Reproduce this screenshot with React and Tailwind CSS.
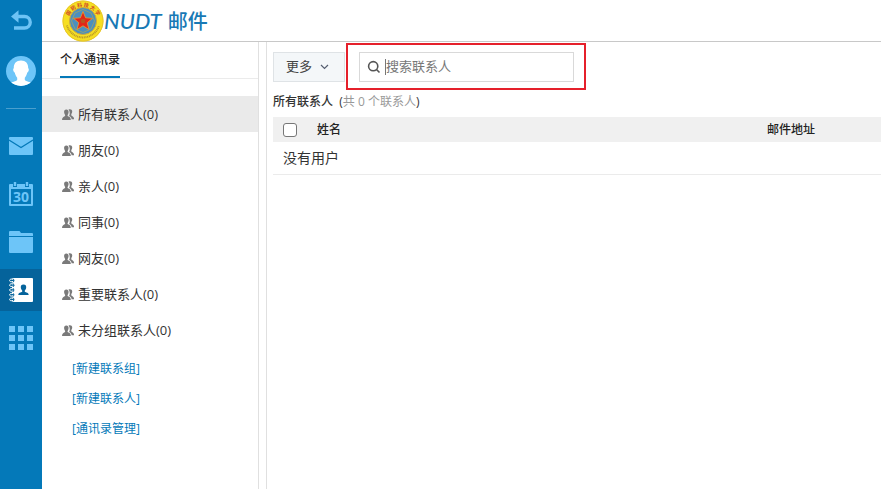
import React, { useState } from "react";

const groups = [
  { name: "所有联系人", count: 0 },
  { name: "朋友", count: 0 },
  { name: "亲人", count: 0 },
  { name: "同事", count: 0 },
  { name: "网友", count: 0 },
  { name: "重要联系人", count: 0 },
  { name: "未分组联系人", count: 0 },
];

const actions = ["[新建联系组]", "[新建联系人]", "[通讯录管理]"];

// --- Icons ---
function BackIcon() {
  return (
    <svg width="22" height="22" viewBox="0 0 22 22" fill="none">
      <path d="M8 6.500H14.500A5.500 5.500 0 0 1 14.500 18H4" stroke="#6dc3f5" strokeWidth="3.400" />
      <path d="M1 6.500L8.500 .3V12.700Z" fill="#6dc3f5" />
    </svg>
  );
}

function Avatar() {
  return (
    <svg width="30" height="30" viewBox="0 0 30 30">
      <clipPath id="avatar-clip"><circle cx="15" cy="15" r="15" /></clipPath>
      <circle cx="15" cy="15" r="15" fill="#6dc5f8" />
      <path
        clipPath="url(#avatar-clip)"
        fill="#fff"
        d="M15 4.500C10.300 4.500 7.600 7.500 7.800 12.300c-.6.400-.8 1.200-.5 2.300.3 1.100.8 1.600 1.400 1.900.5 2.300 1.500 4 2.500 5.200v2.300C10 25.600 6 25.800 3.500 27.200V30H26.500V27.200C24 25.800 20 25.600 18.800 24V21.700c1-1.200 2-2.900 2.500-5.200.6-.3 1.100-.8 1.400-1.900.3-1.100.1-1.900-.5-2.300C22.400 7.500 19.700 4.500 15 4.500Z"
      />
    </svg>
  );
}

function MailIcon() {
  return (
    <svg width="24" height="18" viewBox="0 0 24 18">
      <rect width="24" height="18" rx="1" fill="#6dc5f8" />
      <path d="M0 3L12 10.500L24 3" fill="none" stroke="#0479b9" strokeWidth="1.200" />
    </svg>
  );
}

function CalendarIcon() {
  return (
    <svg width="24" height="24" viewBox="0 0 24 24">
      <path fill="#6dc5f8" d="M1 2H4V5H8V2H16V5H20V2H23Q24 2 24 3V23Q24 24 23 24H1Q0 24 0 23V3Q0 2 1 2ZM2 7V22H22V7Z" fillRule="evenodd" />
      <path d="M6 0V4M18 0V4" stroke="#6dc5f8" strokeWidth="2.400" />
      <text x="12" y="20" textAnchor="middle" fill="#6dc5f8" className="font-['Noto_Sans',sans-serif] text-[14px] font-bold">30</text>
    </svg>
  );
}

function FolderIcon() {
  return (
    <svg width="24" height="22" viewBox="0 0 24 22" fill="#6dc5f8">
      <path d="M1 0H10.500L12 2H23Q24 2 24 3V5H0V1Q0 0 1 0Z" />
      <path d="M0 6H24V21Q24 22 23 22H1Q0 22 0 21Z" />
    </svg>
  );
}

function ContactsIcon() {
  return (
    <svg width="24" height="24" viewBox="0 0 24 24">
      <path fill="#fff" d="M3 0H23Q24 0 24 1V23Q24 24 23 24H3Z" />
      {[2.5, 7.2, 12, 16.8, 21.500].map((y) => (
        <g key={y}>
          <circle cx="3.500" cy={y} r="1.900" fill="#05639b" />
          <path d={`M4.200 ${y - 1}C2.500 ${y - 2} .6 ${y - 1.300} .6 ${y}S2.500 ${y + 1.700} 4.200 ${y + 0.800}`} fill="none" stroke="#fff" strokeWidth="1" />
        </g>
      ))}
      <path fill="#05639b" d="M14.500 6.500C12.400 6.500 11.700 7.800 11.800 9.500C11.900 10.900 12.600 11.900 13.200 12.500V13.800C12 14.500 9.300 14.600 9.300 17H19.700C19.700 14.600 17 14.500 15.800 13.800V12.500C16.400 11.900 17.100 10.900 17.200 9.500C17.300 7.800 16.600 6.500 14.500 6.500Z" />
    </svg>
  );
}

function GridIcon() {
  return (
    <svg width="24" height="24" viewBox="0 0 24 24" fill="#6dc5f8">
      {[0, 9, 18].map((y) => [0, 9, 18].map((x) => <rect key={`${x}-${y}`} x={x} y={y} width="6" height="6" />))}
    </svg>
  );
}

function GroupIcon() {
  return (
    <svg width="12" height="11" viewBox="0 0 12 11" fill="#7a7a7a" className="shrink-0">
      <path d="M6.500 .5C8.300-.3 10.300 .3 10.200 2.500C10.200 3.700 9.800 4.500 9.300 5V6.400C10.300 7.300 12 7.500 12 9.500V10.300H9.600C9.500 8.600 8.500 7.700 7.100 7.100C8.100 5.400 8 2 6.500 .5Z" />
      <path d="M4.300 .5C6 .5 6.700 1.700 6.600 3.300C6.500 4.500 6.100 5.300 5.600 5.900V7C6.700 7.700 8.800 7.900 8.800 11H0C0 8.300 2 7.700 3.100 7V5.900C2.600 5.300 2.200 4.500 2.100 3.300C2 1.700 2.700 .5 4.300 .5Z" />
    </svg>
  );
}

function SearchIcon() {
  return (
    <svg width="14" height="14" viewBox="0 0 14 14" fill="none" stroke="#555" strokeWidth="1.600" className="shrink-0">
      <circle cx="6.200" cy="6.200" r="4.600" />
      <path d="M9.500 9.500L12.500 12.500" />
    </svg>
  );
}

function Seal() {
  return (
    <svg width="42" height="42" viewBox="0 0 42 42">
      <circle cx="21" cy="21" r="20.500" fill="#f6df22" />
      <circle cx="21" cy="21" r="20" fill="none" stroke="#e8c52c" />
      <circle cx="21" cy="21" r="13.500" fill="#4a8fc0" stroke="#d0a83a" />
      <path id="seal-top" d="M6 25A15.300 15.300 0 1 1 36 25" fill="none" />
      <text fill="#d04a28" className="font-['Noto_Sans_CJK_SC',sans-serif] text-[5px] font-bold">
        <textPath href="#seal-top" startOffset="50%" textAnchor="middle">国 防 科 技 大 学</textPath>
      </text>
      <path d="M5 25.500A16.700 16.700 0 0 0 37 25.500" fill="none" stroke="#b8962a" strokeWidth="2" strokeDasharray="1 .7" />
      <path d="M21 9.500L29 13L32.500 21L29 29L21 32.500L13 29L9.500 21L13 13Z" fill="none" stroke="#8da07a" />
      <path d="M21 11.500L23.600 17.800L30.500 18.300L25.200 22.700L27 29.500L21 25.800L15 29.500L16.800 22.700L11.500 18.300L18.400 17.800Z" fill="#e2261a" stroke="#e8a02f" strokeWidth=".8" />
      <circle cx="21" cy="21" r="2.300" fill="#b8541f" />
    </svg>
  );
}

const apps = [
  { id: "mail", label: "邮件", Icon: MailIcon },
  { id: "calendar", label: "日历", Icon: CalendarIcon },
  { id: "files", label: "文件", Icon: FolderIcon },
  { id: "contacts", label: "通讯录", Icon: ContactsIcon },
  { id: "more", label: "应用", Icon: GridIcon },
];

export default function App() {
  const [active, setActive] = useState(0);
  const [query, setQuery] = useState("");

  return (
    <div className="flex min-h-screen bg-white font-['Open_Sans','Noto_Sans_CJK_SC',sans-serif] text-[13px] text-[#333]">
      {/* App rail */}
      <nav className="flex w-[42px] shrink-0 flex-col items-center bg-[#0479b9]">
        <button aria-label="返回" className="mt-[10px]"><BackIcon /></button>
        <button aria-label="个人资料" className="mt-6"><Avatar /></button>
        <div className="mt-[22px] mb-4 h-px w-[30px] bg-[#4a9fce]" />
        <div className="flex w-full flex-col gap-1.5">
          {apps.map(({ id, label, Icon }) => (
            <button
              key={id}
              aria-label={label}
              className={`flex h-[42px] w-full items-center justify-center ${id === "contacts" ? "bg-[#05639b]" : ""}`}
            >
              <Icon />
            </button>
          ))}
        </div>
      </nav>

      <div className="flex min-w-0 flex-1 flex-col">
        <header className="flex h-[42px] items-center border-b border-[#c8c8c8] pl-5">
          <Seal />
          <div className="flex items-center gap-1.5 text-[#1879b5]">
            <span className="font-['Lato',sans-serif] text-[22px] leading-6 font-medium italic">NUDT</span>
            <span className="font-['Noto_Sans_CJK_SC',sans-serif] text-[20px] leading-6 font-medium">邮件</span>
          </div>
        </header>

        <div className="flex flex-1">
          {/* Address book groups */}
          <aside className="w-[217px] shrink-0 border-r border-[#e0e0e0]">
            <div className="flex border-b border-[#ebebeb] pl-[18px]">
              <button className="h-9 border-b-2 border-[#0479b9] text-[12px] leading-9 font-medium text-[#222]">个人通讯录</button>
            </div>
            <ul className="mt-[17px]">
              {groups.map((g, i) => (
                <li key={g.name}>
                  <button
                    onClick={() => setActive(i)}
                    className={`flex h-9 w-full items-center gap-1 pt-px pl-5 text-left ${active === i ? "bg-[#eaeaea]" : ""}`}
                  >
                    <GroupIcon />
                    <span>{g.name}({g.count})</span>
                  </button>
                </li>
              ))}
            </ul>
            <div className="mt-1.5 flex flex-col items-start pl-[30px] text-[12px] leading-[30px] text-[#0479b9]">
              {actions.map((a) => <a key={a} href="#">{a}</a>)}
            </div>
          </aside>

          {/* Contact list */}
          <main className="ml-[7px] min-w-0 flex-1 border-l border-[#e0e0e0] pt-px pl-1.5">
            <div className="flex items-start gap-px">
              <button className="mt-[9px] flex h-[30px] w-[72px] items-center gap-2 border border-[#dfe3e6] bg-[#f4f7f9] pl-3 text-[#444]">
                更多
                <svg width="9" height="6" viewBox="0 0 9 6" fill="none" stroke="#555e70" strokeWidth="1.200">
                  <path d="M1 1L4.500 4.500L8 1" />
                </svg>
              </button>
              <div className="w-[240px] border-2 border-[#e5202b] pt-[7px] pr-[10px] pb-1.5 pl-[11px]">
                <label className="flex h-[30px] items-center gap-1 border border-[#d9d9d9] pl-[7px]">
                  <SearchIcon />
                  <input
                    aria-label="搜索联系人"
                    placeholder="搜索联系人"
                    value={query}
                    onChange={(e) => setQuery(e.target.value)}
                    className="h-4 min-w-0 flex-1 border-l border-[#777] placeholder:text-[#777] focus:outline-none"
                  />
                </label>
              </div>
            </div>

            <h2 className="mt-0.5 text-[12px] leading-5 font-medium">
              所有联系人&nbsp;&nbsp;(<span className="font-normal text-[#999]">共 0 个联系人</span>)
            </h2>

            <table className="mt-[5px] w-full table-fixed text-left">
              <thead>
                <tr className="h-[25px] bg-[#f0f0f0] text-[12px] text-[#222]">
                  <th className="w-11 pl-[10px]">
                    <input type="checkbox" aria-label="全选" className="block size-[14px] appearance-none rounded-[3px] border border-[#777] bg-white checked:bg-[#0479b9]" />
                  </th>
                  <th className="font-medium">姓名</th>
                  <th className="w-[114px] font-medium">邮件地址</th>
                </tr>
              </thead>
              <tbody>
                <tr className="h-8 border-b border-[#ebebeb] text-[14px]">
                  <td colSpan={3} className="pl-[10px]">没有用户</td>
                </tr>
              </tbody>
            </table>
          </main>
        </div>
      </div>
    </div>
  );
}
